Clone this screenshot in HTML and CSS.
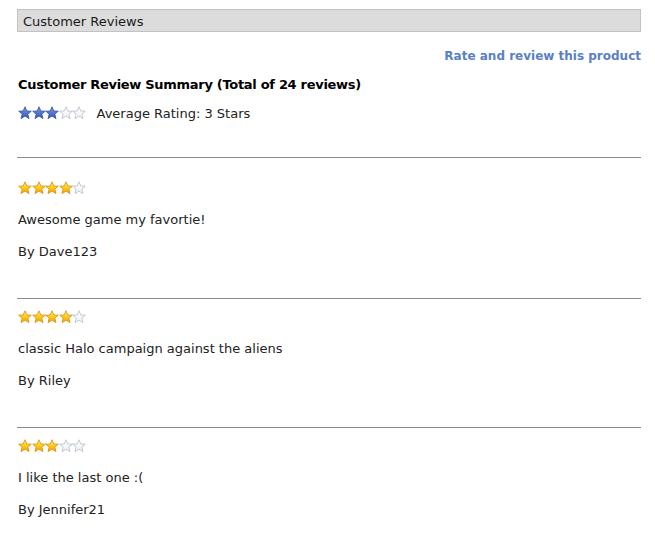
FILE: index.html
```html
<!DOCTYPE html>
<html>
<head>
<meta charset="utf-8">
<link rel="stylesheet" href="styles.css">
</head>
<body>
<svg width="0" height="0" class="defs">
  <defs>
    <linearGradient id="gold" x1="0" y1="0" x2="0" y2="1">
      <stop offset="0" stop-color="#fff3a0"/>
      <stop offset="0.5" stop-color="#ffcc1a"/>
      <stop offset="1" stop-color="#f59d00"/>
    </linearGradient>
    <linearGradient id="blue" x1="0" y1="0" x2="0" y2="1">
      <stop offset="0" stop-color="#7a9be0"/>
      <stop offset="1" stop-color="#2f56b8"/>
    </linearGradient>
    <linearGradient id="grey" x1="0" y1="0" x2="0" y2="1">
      <stop offset="0" stop-color="#ffffff"/>
      <stop offset="1" stop-color="#eef1f5"/>
    </linearGradient>
    <symbol id="star" viewBox="0 0 14 14">
      <path d="M7 0.8 L8.8 5 L13.3 5.2 L9.8 8.1 L11 12.6 L7 10.1 L3 12.6 L4.2 8.1 L0.7 5.2 L5.2 5 Z"/>
    </symbol>
  </defs>
</svg>
<div class="page">
  <div class="titlebar">Customer Reviews</div>
  <div class="rate-row"><a class="rate-link" href="#">Rate and review this product</a></div>
  <h2 class="summary-title">Customer Review Summary (Total of 24 reviews)</h2>
  <div class="avg-row">
    <span class="stars">
      <svg class="s blue"><use href="#star"/></svg><svg class="s blue"><use href="#star"/></svg><svg class="s blue"><use href="#star"/></svg><svg class="s empty"><use href="#star"/></svg><svg class="s empty"><use href="#star"/></svg>
    </span>
    <span class="avg-text">Average Rating: 3 Stars</span>
  </div>

  <div class="review first">
    <div class="stars">
      <svg class="s gold"><use href="#star"/></svg><svg class="s gold"><use href="#star"/></svg><svg class="s gold"><use href="#star"/></svg><svg class="s gold"><use href="#star"/></svg><svg class="s empty"><use href="#star"/></svg>
    </div>
    <p class="review-text">Awesome game my favortie!</p>
    <p class="review-by">By Dave123</p>
  </div>

  <div class="review">
    <div class="stars">
      <svg class="s gold"><use href="#star"/></svg><svg class="s gold"><use href="#star"/></svg><svg class="s gold"><use href="#star"/></svg><svg class="s gold"><use href="#star"/></svg><svg class="s empty"><use href="#star"/></svg>
    </div>
    <p class="review-text">classic Halo campaign against the aliens</p>
    <p class="review-by">By Riley</p>
  </div>

  <div class="review">
    <div class="stars">
      <svg class="s gold"><use href="#star"/></svg><svg class="s gold"><use href="#star"/></svg><svg class="s gold"><use href="#star"/></svg><svg class="s empty"><use href="#star"/></svg><svg class="s empty"><use href="#star"/></svg>
    </div>
    <p class="review-text">I like the last one :(</p>
    <p class="review-by">By Jennifer21</p>
  </div>
</div>
</body>
</html>
```

FILE: styles.css
```css
html, body {
  margin: 0;
  padding: 0;
  background: #ffffff;
}
body {
  font-family: "DejaVu Sans", Verdana, sans-serif;
  font-size: 13px;
  color: #222222;
}
.defs {
  position: absolute;
  width: 0;
  height: 0;
}
.page {
  padding: 9px 14px 0 17px;
}
.titlebar {
  background: #dcdcdc;
  border: 1px solid #c2c2c2;
  height: 21px;
  line-height: 23px;
  padding-left: 5px;
  color: #1a1a1a;
}
.rate-row {
  display: flex;
  justify-content: flex-end;
  margin-top: 15px;
  height: 18px;
  line-height: 19px;
}
.rate-link {
  color: #5a7fc6;
  font-size: 12px;
  font-weight: bold;
  text-decoration: none;
}
.summary-title {
  margin: 10px 0 0 1px;
  font-size: 13px;
  font-weight: bold;
  letter-spacing: -0.3px;
  color: #000;
  line-height: 19px;
}
.avg-row {
  display: flex;
  align-items: center;
  margin: 10px 0 0 1px;
  height: 18px;
}
.avg-text {
  margin-left: 11px;
}
.stars {
  display: flex;
  gap: 0;
}
.s {
  width: 14px;
  height: 14px;
  margin-right: -0.5px;
}
.s.gold { fill: url(#gold); stroke: #d98a00; stroke-width: 0.8; }
.s.blue { fill: url(#blue); stroke: #2d4fa8; stroke-width: 0.8; }
.s.empty { fill: url(#grey); stroke: #b5bcc6; stroke-width: 0.8; }
.review {
  border-top: 1px solid #8a8a8a;
  box-shadow: 0 1px 0 #d0d0d0;
  padding: 10px 0 37px 1px;
}
.review.first {
  margin-top: 35px;
  padding-top: 22px;
}
.review .stars {
  height: 16px;
  align-items: center;
}
.review-text {
  margin: 15px 0 0 0;
  line-height: 18px;
}
.review-by {
  margin: 14px 0 0 0;
  line-height: 18px;
}
```
